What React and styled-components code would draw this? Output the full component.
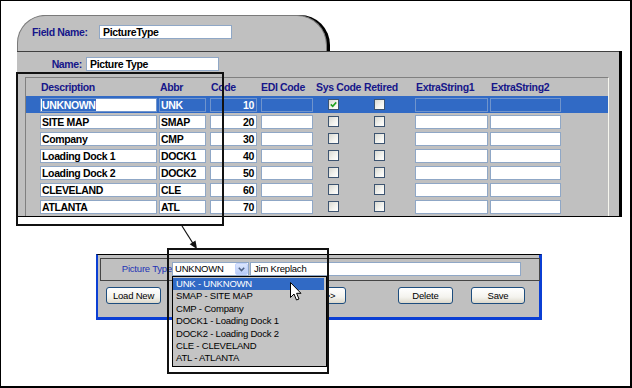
import React from "react";
import styled, { createGlobalStyle } from "styled-components";

const FONT = `"Liberation Sans", Arial, sans-serif`;
const BOLD = `font: bold 10.5px ${FONT}; letter-spacing: -0.35px;`;
const REG = `font: 9.5px ${FONT}; letter-spacing: -0.2px;`;
const NAVY = "#16168a";
const GRAY = "#c0c0c0";

const Global = createGlobalStyle`
  html, body { margin: 0; padding: 0; background: #fff; }
  body { font-family: ${FONT}; }
`;

const Canvas = styled.div`
  position: relative;
  width: 632px;
  height: 388px;
  box-sizing: border-box;
  border: 1px solid #000;
  border-right-width: 2px;
  border-bottom-width: 2px;
  background: #fff;
  overflow: hidden;
  display: flex;
  flex-direction: column;
  align-items: flex-start;
`;

const Window = styled.div`
  margin: 14px 0 0 16px;
  display: flex;
  flex-direction: column;
  align-items: flex-start;
`;

const Tab = styled.div`
  width: 310px;
  height: 36px;
  box-sizing: border-box;
  background: ${GRAY};
  border: 1px solid #7a7a7a;
  border-bottom: none;
  border-radius: 28px 30px 0 0;
  box-shadow: 3px 0 0 #000;
  display: flex;
  align-items: flex-start;
  padding: 9px 0 0 14px;
`;

const Label = styled.div`
  width: ${(p) => p.$w}px;
  margin-right: ${(p) => p.$mr || 0}px;
  text-align: ${(p) => p.$align || "left"};
  ${BOLD}
  line-height: 14px;
  color: ${NAVY};
  white-space: nowrap;
`;

const TextBox = styled.div`
  width: ${(p) => p.$w}px;
  height: 14px;
  box-sizing: border-box;
  border: 1px solid #8fa7c6;
  background: #fff;
  ${(p) => (p.$bold ? BOLD : REG)}
  line-height: 12px;
  padding: 0 3px;
  color: #000;
  white-space: nowrap;
  overflow: hidden;
`;

const Panel = styled.div`
  width: 602px;
  height: 166px;
  box-sizing: border-box;
  background: ${GRAY};
  border-top: 1px solid #404040;
  border-bottom: 1px solid #000;
  box-shadow: 3px 0 0 #000;
  display: flex;
  flex-direction: column;
`;

const NameRow = styled.div`
  height: 25px;
  box-sizing: border-box;
  padding-top: 5px;
  display: flex;
  align-items: flex-start;
`;

const GridFrame = styled.div`
  flex: 1;
  margin-left: 8px;
  width: 584px;
  box-sizing: border-box;
  border-top: 1px solid #808080;
  border-left: 1px solid #808080;
  border-right: 1px solid #f6f6ee;
`;

const COLS = "119px 51px 51px 52px 41px 61px 75px 71px";

const HeadRow = styled.div`
  display: grid;
  grid-template-columns: ${COLS};
  height: 18px;
  padding-left: 14px;
  align-items: center;
`;

const HeadCell = styled.div`
  padding-left: ${(p) => p.$pl}px;
  ${BOLD}
  line-height: 18px;
  color: ${NAVY};
  white-space: nowrap;
`;

const Row = styled.div`
  display: grid;
  grid-template-columns: ${COLS};
  height: 17px;
  box-sizing: border-box;
  padding: 2px 0 0 14px;
  align-items: start;
  background: ${(p) => (p.$sel ? "#316ac5" : "transparent")};
`;

const Cell = styled.div`
  width: ${(p) => p.$w}px;
  height: 14px;
  box-sizing: border-box;
  border: 1px solid ${(p) => (p.$sel ? "#7094cc" : "#8fa7c6")};
  background: ${(p) => (p.$sel && !p.$white ? "transparent" : "#fff")};
  color: ${(p) => (p.$sel && !p.$white ? "#fff" : "#000")};
  ${BOLD}
  line-height: 12px;
  padding: 0 ${(p) => (p.$right ? 2 : 1)}px 0 1px;
  text-align: ${(p) => (p.$right ? "right" : "left")};
  white-space: nowrap;
  overflow: hidden;
`;

const Highlight = styled.span`
  background: #316ac5;
  color: #fff;
`;

const Check = styled.div`
  width: 11px;
  height: 11px;
  box-sizing: border-box;
  margin: 1px 0 0 ${(p) => p.$ml}px;
  border: 1px solid #3d5470;
  background: linear-gradient(135deg, #d9d9d2 0%, #f4f4f0 60%, #fff 100%);
  display: flex;
  align-items: center;
  justify-content: center;
`;

const Dialog = styled.div`
  margin: 37px 0 0 95px;
  width: 446px;
  height: 66px;
  box-sizing: border-box;
  background: ${GRAY};
  border: 3px solid #0b3fd4;
  border-left-width: 2px;
  border-top: 1px solid #000;
  display: flex;
  flex-direction: column;
  align-items: flex-start;
`;

const Group = styled.div`
  margin: 3px 0 0 2px;
  width: 440px;
  height: 23px;
  box-sizing: border-box;
  border: 1px solid #454545;
  padding-top: 3px;
  display: flex;
  align-items: flex-start;
`;

const PlainLabel = styled.div`
  width: 71px;
  text-align: right;
  ${REG}
  line-height: 14px;
  color: #2233b5;
  white-space: nowrap;
`;

const Combo = styled.div`
  width: 77px;
  height: 14px;
  box-sizing: border-box;
  border: 1px solid #8fa7c6;
  background: #fff;
  margin-right: 1px;
  display: flex;
  align-items: center;
  justify-content: space-between;
  ${REG}
  line-height: 12px;
  padding-left: 2px;
`;

const ComboButton = styled.div`
  width: 13px;
  height: 12px;
  box-sizing: border-box;
  border: 1px solid #c3d3fd;
  border-radius: 2px;
  background: linear-gradient(#dce6fd, #b7cbf8);
  display: flex;
  align-items: center;
  justify-content: center;
`;

const ButtonRow = styled.div`
  margin-top: 6px;
  display: flex;
  align-items: flex-start;
`;

const Button = styled.div`
  width: ${(p) => p.$w}px;
  height: 17px;
  margin-left: ${(p) => p.$ml}px;
  box-sizing: border-box;
  border: 1px solid #1d4d7e;
  border-radius: 3px;
  background: linear-gradient(#ffffff 0%, #f4f3ee 60%, #dcd8cb 100%);
  ${REG}
  line-height: 15px;
  text-align: center;
  color: #000;
`;

const DropList = styled.div`
  position: absolute;
  left: 171px;
  top: 275px;
  width: 155px;
  height: 91px;
  box-sizing: border-box;
  border: 1px solid #000;
  background: #c4c4c4;
  padding-top: 1px;
  display: flex;
  flex-direction: column;
`;

const DropItem = styled.div`
  height: 12.4px;
  padding-left: 3px;
  margin-right: 2px;
  ${REG}
  line-height: 12.4px;
  white-space: nowrap;
  color: ${(p) => (p.$sel ? "#fff" : "#000")};
  background: ${(p) => (p.$sel ? "#316ac5" : "transparent")};
`;

const Callout = styled.div`
  position: absolute;
  left: ${(p) => p.$x}px;
  top: ${(p) => p.$y}px;
  width: ${(p) => p.$w}px;
  height: ${(p) => p.$h}px;
  box-sizing: border-box;
  border: 2px solid #111;
  pointer-events: none;
`;

const Overlay = styled.svg`
  position: absolute;
  left: ${(p) => p.$x}px;
  top: ${(p) => p.$y}px;
  overflow: visible;
`;

const rows = [
  { d: "UNKNOWN", a: "UNK", c: "10", sys: true, sel: true },
  { d: "SITE MAP", a: "SMAP", c: "20" },
  { d: "Company", a: "CMP", c: "30" },
  { d: "Loading Dock 1", a: "DOCK1", c: "40" },
  { d: "Loading Dock 2", a: "DOCK2", c: "50" },
  { d: "CLEVELAND", a: "CLE", c: "60" },
  { d: "ATLANTA", a: "ATL", c: "70" },
];

const items = [
  "UNK - UNKNOWN",
  "SMAP - SITE MAP",
  "CMP - Company",
  "DOCK1 - Loading Dock 1",
  "DOCK2 - Loading Dock 2",
  "CLE - CLEVELAND",
  "ATL - ATLANTA",
];

const CheckMark = () => (
  <svg width="7" height="7" viewBox="0 0 7 7">
    <path d="M0.8 3.4 L2.7 5.3 L6.2 1.4" fill="none" stroke="#21a121" strokeWidth="1.6" />
  </svg>
);

export default function App() {
  return (
    <>
      <Global />
      <Canvas>
        <Window>
          <Tab>
            <Label $w={67}>Field Name:</Label>
            <TextBox $w={133} $bold>PictureType</TextBox>
          </Tab>
          <Panel>
            <NameRow>
              <Label $w={65} $mr={4} $align="right">Name:</Label>
              <TextBox $w={133} $bold>Picture Type</TextBox>
            </NameRow>
            <GridFrame>
              <HeadRow>
                <HeadCell $pl={1}>Description</HeadCell>
                <HeadCell $pl={1}>Abbr</HeadCell>
                <HeadCell $pl={1}>Code</HeadCell>
                <HeadCell $pl={0}>EDI Code</HeadCell>
                <HeadCell $pl={3}>Sys Code</HeadCell>
                <HeadCell $pl={10}>Retired</HeadCell>
                <HeadCell $pl={1}>ExtraString1</HeadCell>
                <HeadCell $pl={1}>ExtraString2</HeadCell>
              </HeadRow>
              {rows.map((r) => (
                <Row key={r.a} $sel={r.sel}>
                  <Cell $w={117} $sel={r.sel} $white>
                    {r.sel ? <Highlight>{r.d}</Highlight> : r.d}
                  </Cell>
                  <Cell $w={47} $sel={r.sel}>{r.a}</Cell>
                  <Cell $w={47} $sel={r.sel} $right>{r.c}</Cell>
                  <Cell $w={52} $sel={r.sel} />
                  <Check $ml={15}>{r.sys && <CheckMark />}</Check>
                  <Check $ml={20} />
                  <Cell $w={73} $sel={r.sel} />
                  <Cell $w={71} $sel={r.sel} />
                </Row>
              ))}
            </GridFrame>
          </Panel>
        </Window>

        <Dialog>
          <Group>
            <PlainLabel>Picture Type</PlainLabel>
            <Combo>
              <span>UNKNOWN</span>
              <ComboButton>
                <svg width="7" height="5" viewBox="0 0 7 5">
                  <path d="M0.8 0.8 L3.5 3.6 L6.2 0.8" fill="none" stroke="#4d6185" strokeWidth="1.5" />
                </svg>
              </ComboButton>
            </Combo>
            <TextBox $w={271}>Jim Kreplach</TextBox>
          </Group>
          <ButtonRow>
            <Button $w={55} $ml={8}>Load New</Button>
            <Button $w={32} $ml={153}>&gt;&gt;</Button>
            <Button $w={55} $ml={52}>Delete</Button>
            <Button $w={54} $ml={18}>Save</Button>
          </ButtonRow>
        </Dialog>

        <DropList>
          {items.map((t, i) => (
            <DropItem key={t} $sel={i === 0}>{t}</DropItem>
          ))}
        </DropList>

        <Callout $x={15} $y={71} $w={208} $h={154} />
        <Callout $x={166} $y={247} $w={162} $h={126} />

        <Overlay $x={169} $y={219} width="40" height="35" viewBox="0 0 40 35">
          <line x1="12" y1="6" x2="24" y2="25" stroke="#111" strokeWidth="1.2" />
          <polygon points="27,29 19.7,24.2 25.5,20.4" fill="#111" />
        </Overlay>

        <Overlay $x={289} $y={281} width="13" height="20" viewBox="0 0 13 20">
          <path
            d="M0.5 0.5 L0.5 15.5 L4 12 L6.5 18 L9 17 L6.6 11.3 L11 11.3 Z"
            fill="#fff"
            stroke="#000"
            strokeWidth="1"
            strokeLinejoin="miter"
          />
        </Overlay>
      </Canvas>
    </>
  );
}
